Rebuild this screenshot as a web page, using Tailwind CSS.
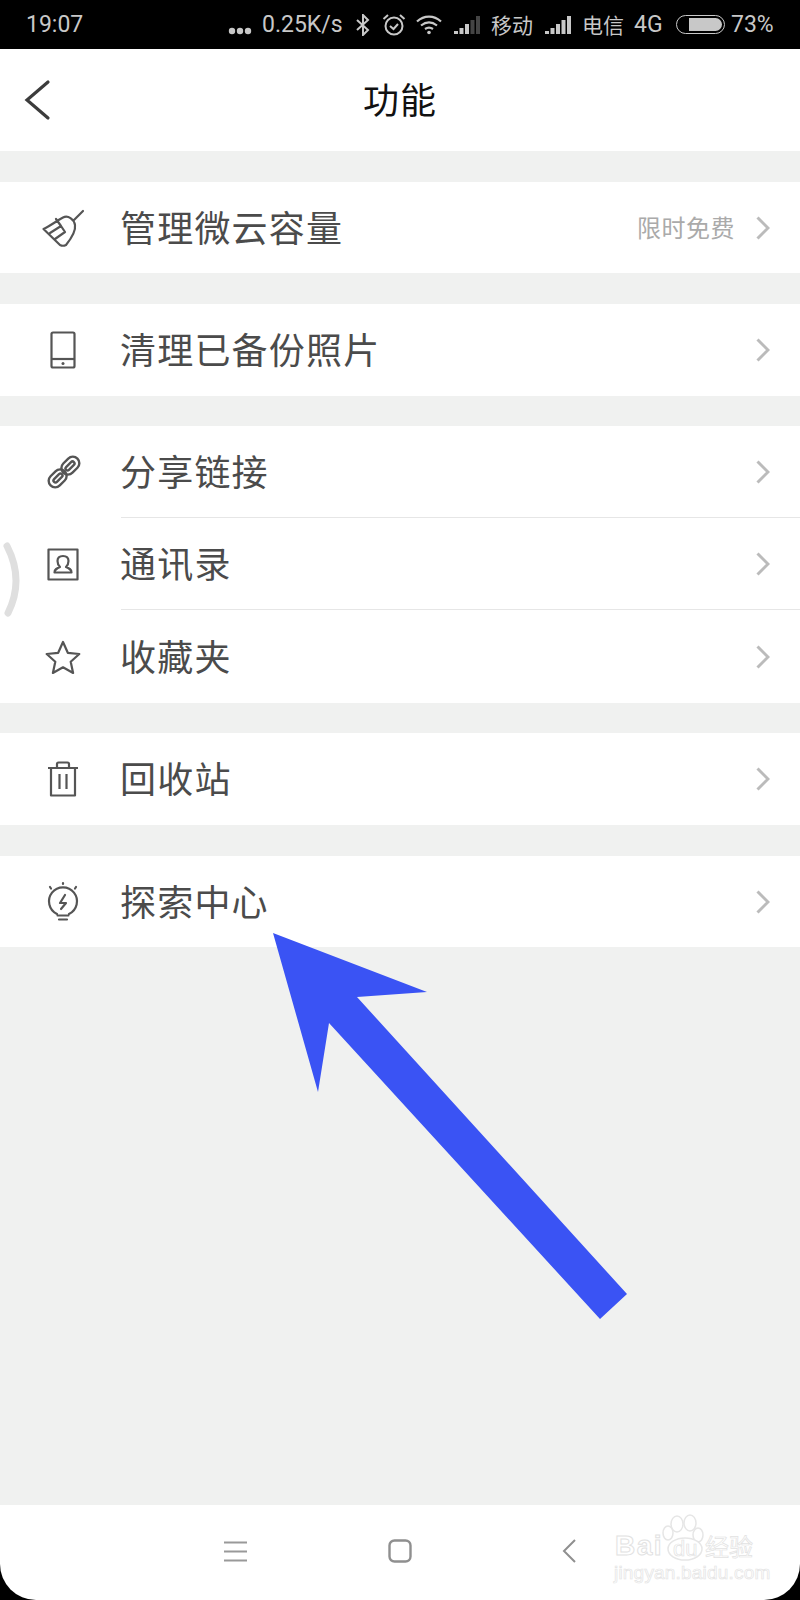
<!DOCTYPE html>
<html lang="zh">
<head>
  <meta charset="UTF-8" />
  <title>功能</title>
  <script src="https://cdn.jsdelivr.net/npm/@tailwindcss/browser@4"></script>
</head>
<body class="relative w-[800px] h-[1600px] overflow-hidden flex flex-col bg-[#f0f1f0] font-['Noto_Sans_CJK_SC',sans-serif]">

  <!-- status bar -->
  <div class="h-[49px] bg-black text-[#c8c8c8] flex items-center pl-[26px] font-['Roboto','Noto_Sans_CJK_SC',sans-serif] text-[23px] leading-none">
    <span class="w-[202px]">19:07</span>
    <svg class="w-[24px] h-[8px] mt-[12px]" viewBox="0 0 24 8" fill="#c8c8c8"><circle cx="4" cy="4" r="3.200"/><circle cx="12" cy="4" r="3.200"/><circle cx="20" cy="4" r="3.200"/></svg>
    <span class="ml-[10px] w-[82px]">0.25K/s</span>
    <svg class="ml-[11px] w-[16px] h-[22px]" viewBox="0 0 16 22" fill="none" stroke="#c8c8c8" stroke-width="2"><path d="M2 6l11 10-5 5V1l5 5L2 16"/></svg>
    <svg class="ml-[11px] w-[24px] h-[24px]" viewBox="0 0 24 24" fill="none" stroke="#c8c8c8" stroke-width="2"><circle cx="12" cy="13" r="8.500"/><path d="M8 13l3.500 3L16 11M1.500 6L6 2M22.500 6L18 2"/></svg>
    <svg class="ml-[10px] w-[26px] h-[20px]" viewBox="0 0 26 20" fill="none" stroke="#c8c8c8" stroke-width="2.200"><path d="M1 6.500C8 0 18 0 25 6.500M5 10.500c5-4 11-4 16 0M9 14c3-2 5-2 8 0"/><circle cx="13" cy="17.500" r="1.800" fill="#c8c8c8" stroke="none"/></svg>
    <svg class="ml-[12px] w-[26px] h-[18px]" viewBox="0 0 26 18"><path fill="#c8c8c8" d="M0 15h4v3H0zM5.500 12h4v6h-4zM11 8h4v10h-4z"/><path fill="#444" d="M16.500 4h4v14h-4zM22 0h4v18h-4z"/></svg>
    <span class="ml-[11px] text-[21px] w-[42px] font-['Noto_Sans_CJK_SC',sans-serif]">移动</span>
    <svg class="ml-[12px] w-[26px] h-[18px]" viewBox="0 0 26 18" fill="#c8c8c8"><path d="M0 15h4v3H0zM5.500 12h4v6h-4zM11 8h4v10h-4zM16.500 4h4v14h-4zM22 0h4v18h-4z"/></svg>
    <span class="ml-[11px] text-[21px] w-[42px] font-['Noto_Sans_CJK_SC',sans-serif]">电信</span>
    <span class="ml-[10px] w-[31px] text-[23px]">4G</span>
    <div class="ml-[11px] w-[49px] h-[19px] rounded-full border-[1.500px] border-[#c8c8c8] p-[2px] flex justify-end">
      <div class="w-[33px] h-full bg-[#c8c8c8] rounded-r-full"></div>
    </div>
    <span class="ml-[6px]">73%</span>
  </div>

  <!-- nav -->
  <div class="h-[102px] bg-white relative flex items-center justify-center">
    <svg class="absolute left-[24px] top-[30px] w-[28px] h-[42px]" viewBox="0 0 28 42" fill="none" stroke="#3c3c3c" stroke-width="3.200" stroke-linecap="round"><path d="M24 3L3 21l21 18"/></svg>
    <span class="text-[36px] tracking-[1px] text-[#111] leading-none pb-[4px]">功能</span>
  </div>

  <!-- groups -->
  <div class="mt-[31px] bg-white">
    <div class="flex items-center h-[91px]">
      <div class="w-[121px] pl-[40px] flex">
        <svg class="w-[46px] h-[40px]" viewBox="40 208 46 40" fill="none" stroke="#555" stroke-width="2.200" stroke-linejoin="round" stroke-linecap="round"><path d="M74 220L83 211M43.500 229C50 226 58 220 63 217.500C68 215 74 219 75 225C76 231 70 240 66 245C64 246 62 246 60 245ZM50 233L61 226L65 232L55 239M61 226L56 219"/></svg>
      </div>
      <span class="-ml-[1px] flex-1 text-[36px] tracking-[1.200px] text-[#4b4b4b] leading-none pb-[4px]">管理微云容量</span>
      <span class="text-[24px] tracking-[0.500px] text-[#aaa] leading-none pb-[2px] mr-[21px]">限时免费</span>
      <svg class="w-[14px] h-[24px] mr-[30px]" viewBox="0 0 14 24" fill="none" stroke="#bbb" stroke-width="3"><path d="M1.500 1.500L12 12 1.500 22.500"/></svg>
    </div>
  </div>

  <div class="mt-[31px] bg-white">
    <div class="flex items-center h-[92px]">
      <div class="w-[121px] pl-[50px] flex">
        <svg class="w-[26px] h-[38px]" viewBox="0 0 26 38" fill="none" stroke="#555" stroke-width="2.200" stroke-linejoin="round"><rect x="1.500" y="1.500" width="23" height="35" rx="1.500"/><path d="M1.500 28h23"/><circle cx="13" cy="32.500" r="1.500" fill="#555" stroke="none"/></svg>
      </div>
      <span class="-ml-[1px] flex-1 text-[36px] tracking-[1.200px] text-[#4b4b4b] leading-none pb-[4px]">清理已备份照片</span>
      <svg class="w-[14px] h-[24px] mr-[30px]" viewBox="0 0 14 24" fill="none" stroke="#bbb" stroke-width="3"><path d="M1.500 1.500L12 12 1.500 22.500"/></svg>
    </div>
  </div>

  <div class="mt-[30px] bg-white">
    <div class="flex items-center h-[92px]">
      <div class="w-[121px] pl-[47px] flex">
        <svg class="w-[34px] h-[34px]" viewBox="0 0 34 34" fill="none" stroke="#555" stroke-width="2.400"><g transform="rotate(-45 17 17)"><rect x="-2" y="10.500" width="20" height="13" rx="6.500"/><rect x="16" y="10.500" width="20" height="13" rx="6.500"/><rect x="3" y="15" width="11" height="4" rx="2"/><rect x="20" y="15" width="11" height="4" rx="2"/></g></svg>
      </div>
      <div class="flex-1 h-full flex items-center border-b border-[#e6e6e6]">
        <span class="-ml-[1px] flex-1 text-[36px] tracking-[1.200px] text-[#4b4b4b] leading-none pb-[4px]">分享链接</span>
        <svg class="w-[14px] h-[24px] mr-[30px]" viewBox="0 0 14 24" fill="none" stroke="#bbb" stroke-width="3"><path d="M1.500 1.500L12 12 1.500 22.500"/></svg>
      </div>
    </div>
    <div class="flex items-center h-[92px]">
      <div class="w-[121px] pl-[47px] flex">
        <svg class="w-[32px] h-[33px]" viewBox="0 0 32 33" fill="none" stroke="#555" stroke-width="2.200" stroke-linejoin="round"><rect x="1.500" y="1.500" width="29" height="30"/><path d="M7.500 24.500c0-3 2-4 5.500-5.500-2-2-2.500-3.500-2.500-6 0-3 2-5 5.500-5s5.500 2 5.500 5c0 2.500-.5 4-2.500 6 3.500 1.500 5.500 2.500 5.500 5.500z"/></svg>
      </div>
      <div class="flex-1 h-full flex items-center border-b border-[#e6e6e6]">
        <span class="-ml-[1px] flex-1 text-[36px] tracking-[1.200px] text-[#4b4b4b] leading-none pb-[4px]">通讯录</span>
        <svg class="w-[14px] h-[24px] mr-[30px]" viewBox="0 0 14 24" fill="none" stroke="#bbb" stroke-width="3"><path d="M1.500 1.500L12 12 1.500 22.500"/></svg>
      </div>
    </div>
    <div class="flex items-center h-[93px]">
      <div class="w-[121px] pl-[45px] flex">
        <svg class="w-[36px] h-[34px]" viewBox="0 0 36 34" fill="none" stroke="#555" stroke-width="2.200" stroke-linejoin="round"><path d="M18 2l4.800 10.800 11.500 1.200-8.600 7.700 2.400 11.300L18 27.300 7.900 33l2.400-11.300L1.700 14l11.500-1.200z"/></svg>
      </div>
      <span class="-ml-[1px] flex-1 text-[36px] tracking-[1.200px] text-[#4b4b4b] leading-none pb-[4px]">收藏夹</span>
      <svg class="w-[14px] h-[24px] mr-[30px]" viewBox="0 0 14 24" fill="none" stroke="#bbb" stroke-width="3"><path d="M1.500 1.500L12 12 1.500 22.500"/></svg>
    </div>
  </div>

  <div class="mt-[30px] bg-white">
    <div class="flex items-center h-[92px]">
      <div class="w-[121px] pl-[47px] flex">
        <svg class="w-[32px] h-[36px]" viewBox="0 0 32 36" fill="none" stroke="#555" stroke-width="2.200" stroke-linejoin="round"><path d="M1 7h30M4 7v27.500h24V7M10 7V3c0-1 .5-1.500 1.500-1.500h9c1 0 1.500.5 1.500 1.500v4M12.500 13v15M19.500 13v15"/></svg>
      </div>
      <span class="-ml-[1px] flex-1 text-[36px] tracking-[1.200px] text-[#4b4b4b] leading-none pb-[4px]">回收站</span>
      <svg class="w-[14px] h-[24px] mr-[30px]" viewBox="0 0 14 24" fill="none" stroke="#bbb" stroke-width="3"><path d="M1.500 1.500L12 12 1.500 22.500"/></svg>
    </div>
  </div>

  <div class="mt-[31px] bg-white">
    <div class="flex items-center h-[91px]">
      <div class="w-[121px] pl-[45px] flex">
        <svg class="w-[36px] h-[42px]" viewBox="45 880 36 42" fill="none" stroke="#555" stroke-width="2.200" stroke-linecap="round" stroke-linejoin="round"><path d="M63 882v1M50 886l1 1.500M76 886l-1 1.500M57 913A14 14 0 1 1 69 913M57.500 914.500h11M59 918.500h8M65 894L60 902H66L61 908"/></svg>
      </div>
      <span class="-ml-[1px] flex-1 text-[36px] tracking-[1.200px] text-[#4b4b4b] leading-none pb-[4px]">探索中心</span>
      <svg class="w-[14px] h-[24px] mr-[30px]" viewBox="0 0 14 24" fill="none" stroke="#bbb" stroke-width="3"><path d="M1.500 1.500L12 12 1.500 22.500"/></svg>
    </div>
  </div>

  <!-- bottom nav -->
  <div class="mt-auto h-[95px] bg-white pt-[34px] rounded-b-[36px] relative">
    <div class="flex items-center h-[24px]">
      <svg class="ml-[224px] w-[23px] h-[21px]" viewBox="0 0 23 21" fill="none" stroke="#999" stroke-width="2.200"><path d="M0 1.500h23M0 10.500h23M0 19.500h23"/></svg>
      <svg class="ml-[141px] w-[24px] h-[24px]" viewBox="0 0 24 24" fill="none" stroke="#8f8f8f" stroke-width="2.400"><rect x="1.500" y="1.500" width="21" height="21" rx="5"/></svg>
      <svg class="ml-[150px] w-[14px] h-[24px]" viewBox="0 0 14 24" fill="none" stroke="#8f8f8f" stroke-width="2"><path d="M13 1L2 12l11 11"/></svg>
    </div>
  </div>

  <!-- black screen corners behind the bottom bar -->
  <div class="absolute bottom-0 left-0 w-[800px] h-[40px] bg-black -z-10"></div>

  <!-- scroll handle at the left edge -->
  <svg class="absolute left-0 top-[540px] w-[24px] h-[80px]" viewBox="0 0 24 80" fill="none" stroke="#dfdfdf" stroke-width="7" stroke-linecap="round"><path d="M7 6Q24.500 40 8 73"/></svg>

  <!-- watermark -->
  <div class="absolute left-[600px] top-[1512px] w-[200px] h-[88px] text-white">
    <svg class="absolute left-[60px] top-[2px] w-[46px] h-[48px]" viewBox="0 0 46 48" fill="#fff" stroke="#e6e6e6" stroke-width="1.500"><ellipse cx="17" cy="10" rx="6" ry="8"/><ellipse cx="30" cy="9" rx="6" ry="8"/><ellipse cx="38" cy="21" rx="5" ry="7"/><ellipse cx="8" cy="19" rx="5" ry="7"/><ellipse cx="25" cy="35" rx="17" ry="11"/></svg>
    <span class="absolute left-[15px] top-[20px] text-[28px] leading-none tracking-[1.500px] font-['Liberation_Sans',sans-serif] font-bold [-webkit-text-stroke:1px_#e2e2e2]">Bai</span>
    <span class="absolute left-[73px] top-[26px] text-[22px] leading-none font-['Liberation_Sans',sans-serif] [-webkit-text-stroke:0.700px_#e2e2e2]">du</span>
    <span class="absolute left-[105px] top-[22px] text-[24px] leading-none [-webkit-text-stroke:0.700px_#e2e2e2]">经验</span>
    <span class="absolute left-[14px] top-[51px] text-[19px] leading-none tracking-[0.200px] font-['Liberation_Sans',sans-serif] [-webkit-text-stroke:0.700px_#e4e4e4]">jingyan.baidu.com</span>
  </div>

  <!-- annotation arrow -->
  <svg class="absolute left-0 top-0 w-[800px] h-[1600px] pointer-events-none" viewBox="0 0 800 1600"><polygon fill="#3a53f4" points="273,933 427,992 357,997 627,1294 600,1319 329,1023 318,1092"/></svg>
</body>
</html>
